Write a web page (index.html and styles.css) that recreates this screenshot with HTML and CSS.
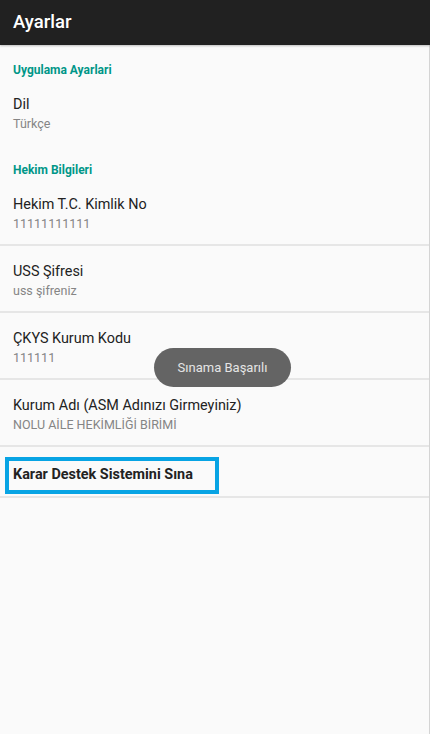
FILE: index.html
```html
<!DOCTYPE html>
<html lang="tr">
<head>
<meta charset="utf-8">
<title>Ayarlar</title>
<link rel="stylesheet" href="styles.css">
</head>
<body>
<div class="screen">
  <header class="toolbar">Ayarlar</header>
  <main class="prefs">
    <div class="category">Uygulama Ayarlari</div>
    <div class="pref pref-plain">
      <div class="pref-title">Dil</div>
      <div class="pref-summary">Türkçe</div>
    </div>
    <div class="category">Hekim Bilgileri</div>
    <div class="pref">
      <div class="pref-title">Hekim T.C. Kimlik No</div>
      <div class="pref-summary">11111111111</div>
    </div>
    <div class="pref">
      <div class="pref-title">USS Şifresi</div>
      <div class="pref-summary">uss şifreniz</div>
    </div>
    <div class="pref">
      <div class="pref-title">ÇKYS Kurum Kodu</div>
      <div class="pref-summary">111111</div>
    </div>
    <div class="pref">
      <div class="pref-title">Kurum Adı (ASM Adınızı Girmeyiniz)</div>
      <div class="pref-summary">NOLU AİLE HEKİMLİĞİ BİRİMİ</div>
    </div>
    <div class="pref pref-action">
      <div class="highlight">Karar Destek Sistemini Sına</div>
    </div>
  </main>
  <div class="toast">Sınama Başarılı</div>
</div>
</body>
</html>
```

FILE: styles.css
```css
* { box-sizing: border-box; }
html, body {
  margin: 0;
  padding: 0;
  background: #fafafa;
}
body {
  font-family: Roboto, "Noto Sans", "Liberation Sans", sans-serif;
  color: #212121;
}
.screen {
  position: relative;
  width: 430px;
  height: 734px;
  overflow: hidden;
  background: #fafafa;
}
.toolbar {
  height: 45px;
  background: #212121;
  color: #ffffff;
  font-size: 18.5px;
  font-weight: 500;
  line-height: 44px;
  padding-left: 13px;
  box-shadow: 0 1px 2px rgba(0,0,0,0.25);
  position: relative;
  z-index: 1;
}
.prefs {
  height: 689px;
  border-right: 1px solid #d4d4d4;
}
.category {
  padding: 17px 13px 1px;
  font-size: 12px;
  line-height: 16px;
  font-weight: 700;
  color: #009688;
  height: 34px;
}
.pref {
  padding: 15px 13px 11px;
  border-bottom: 2px solid #e6e6e6;
}
.pref-plain {
  border-bottom: none;
  padding-bottom: 12px;
}
.pref-title {
  font-size: 14.4px;
  line-height: 22px;
  color: #222222;
}
.pref-summary {
  font-size: 12.5px;
  line-height: 18px;
  margin-top: -1px;
  color: #858585;
}
.pref-action {
  padding: 10px 0 2px 5px;
}
.highlight {
  width: 214px;
  height: 37px;
  border: 4px solid #08a4e4;
  padding: 5px 0 0 4px;
  font-size: 14.4px;
  line-height: 18px;
  font-weight: 700;
  color: #222222;
}
.toast {
  position: absolute;
  left: 154px;
  top: 348px;
  width: 137px;
  height: 39px;
  border-radius: 20px;
  background: #646464;
  color: #e4e4e4;
  font-size: 13px;
  line-height: 39px;
  text-align: center;
}
```
